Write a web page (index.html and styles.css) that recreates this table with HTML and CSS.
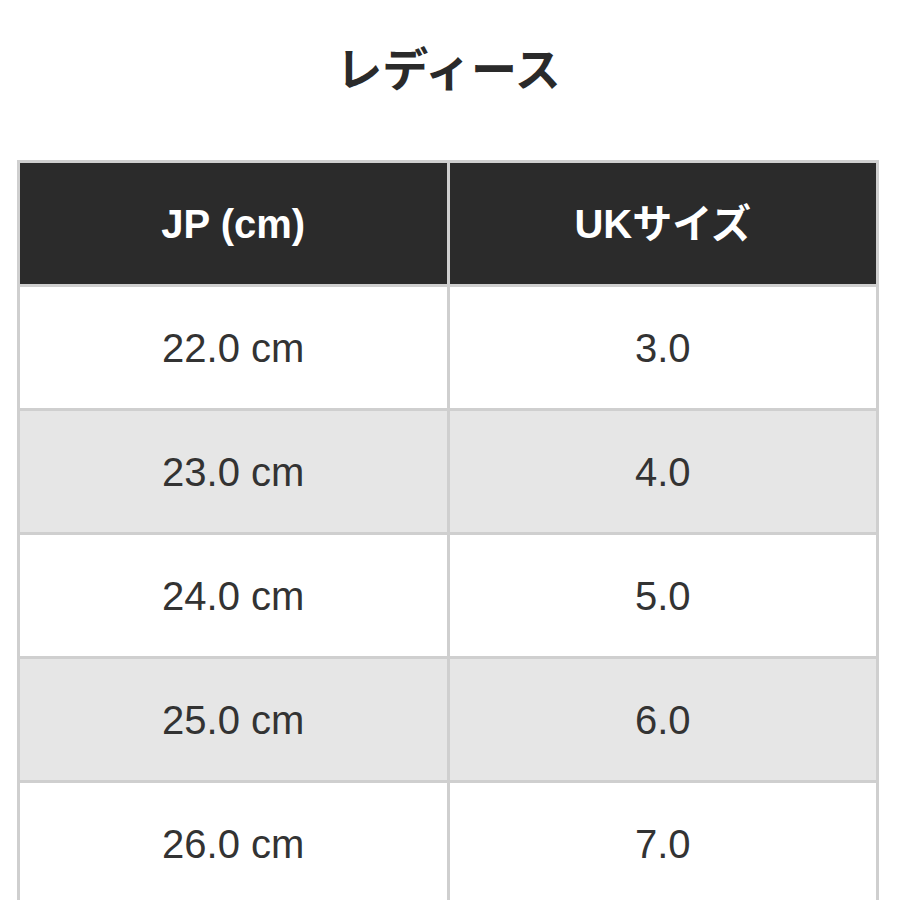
FILE: index.html
```html
<!DOCTYPE html>
<html lang="ja">
<head>
<meta charset="utf-8">
<link rel="stylesheet" href="styles.css">
</head>
<body>
<main class="page">
  <h1 class="title">レディース</h1>
  <table class="size-table">
    <thead>
      <tr><th>JP (cm)</th><th>UKサイズ</th></tr>
    </thead>
    <tbody>
      <tr><td>22.0 cm</td><td>3.0</td></tr>
      <tr class="alt"><td>23.0 cm</td><td>4.0</td></tr>
      <tr><td>24.0 cm</td><td>5.0</td></tr>
      <tr class="alt"><td>25.0 cm</td><td>6.0</td></tr>
      <tr><td>26.0 cm</td><td>7.0</td></tr>
    </tbody>
  </table>
</main>
</body>
</html>
```
FILE: styles.css
```css
html, body {
  margin: 0;
  padding: 0;
  background: #ffffff;
}
body {
  font-family: "Liberation Sans", "Noto Sans CJK JP", sans-serif;
  color: #333333;
}
.page {
  padding: 0 20px 0 17px;
}
.title {
  margin: 0;
  padding: 47px 0 67px;
  font-size: 46px;
  line-height: 46px;
  font-weight: 700;
  text-align: center;
  color: #2a2a2a;
}
.size-table {
  width: 862px;
  border-collapse: collapse;
  table-layout: fixed;
  border: 3px solid #cfcfcf;
}
.size-table th,
.size-table td {
  width: 50%;
  height: 121px;
  padding: 0;
  border: 3px solid #cfcfcf;
  text-align: center;
  vertical-align: middle;
  font-size: 40px;
  line-height: 1;
}
.size-table th {
  background: #2b2b2b;
  color: #ffffff;
  font-weight: 700;
}
.size-table td {
  background: #ffffff;
  color: #333333;
  font-weight: 400;
}
.size-table tr.alt td {
  background: #e6e6e6;
}
```
